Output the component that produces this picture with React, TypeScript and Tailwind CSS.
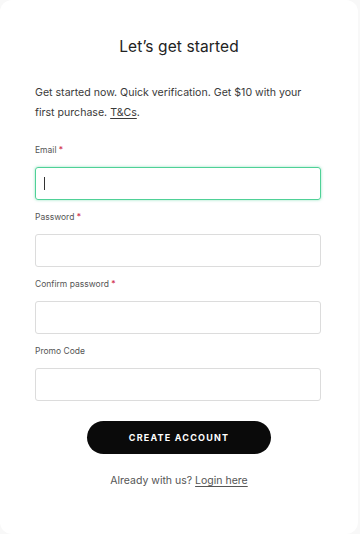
export default function App() {
  const fields = [
    { label: "Email", required: true, focused: true },
    { label: "Password", required: true },
    { label: "Confirm password", required: true },
    { label: "Promo Code", required: false },
  ]

  return (
    <div className="h-[534px] w-[360px] bg-[#f8f8f8] overflow-hidden" style={{ fontFamily: "Inter, 'Liberation Sans', sans-serif" }}>
      <div className="h-full w-[358px] bg-white rounded-[12px] px-[35px] pt-[37px]">
        <h1 className="text-center text-[15.5px] text-[#222] leading-[20px] tracking-[0.1px]">Let’s get started</h1>

        <p className="mt-[26px] max-w-[275px] text-[10.6px] leading-[20px] text-[#3a3a3a]">
          Get started now. Quick verification. Get $10 with your first purchase.{" "}
          <span className="underline underline-offset-2">T&amp;Cs</span>.
        </p>

        <form className="mt-[20px] flex flex-col">
          {fields.map((f) => (
            <div key={f.label} className="flex flex-col mb-[10.5px]">
              <label className="text-[8.5px] leading-[14px] text-[#555] mb-[9.5px]">
                {f.label}
                {f.required && <span className="text-[#d0314f]"> *</span>}
              </label>
              <div
                className={
                  f.focused
                    ? "h-[33px] w-[286px] rounded-[3px] border border-[#4fd197] shadow-[0_0_3px_rgba(79,209,151,0.6)] flex items-center pl-[8px]"
                    : "h-[33px] w-[286px] rounded-[3px] border border-[#dcdcdc] flex items-center pl-[8px]"
                }
              >
                {f.focused && <span className="block w-px h-[13px] bg-[#333]" />}
              </div>
            </div>
          ))}
        </form>

        <div className="mt-[10px] flex justify-center">
          <button className="h-[33px] w-[184px] rounded-full bg-[#0a0a0a] text-white text-[9px] font-bold tracking-[1.2px]">
            CREATE ACCOUNT
          </button>
        </div>

        <p className="mt-[19px] text-center text-[10.5px] text-[#555]">
          Already with us? <span className="underline underline-offset-2">Login here</span>
        </p>
      </div>
    </div>
  )
}
